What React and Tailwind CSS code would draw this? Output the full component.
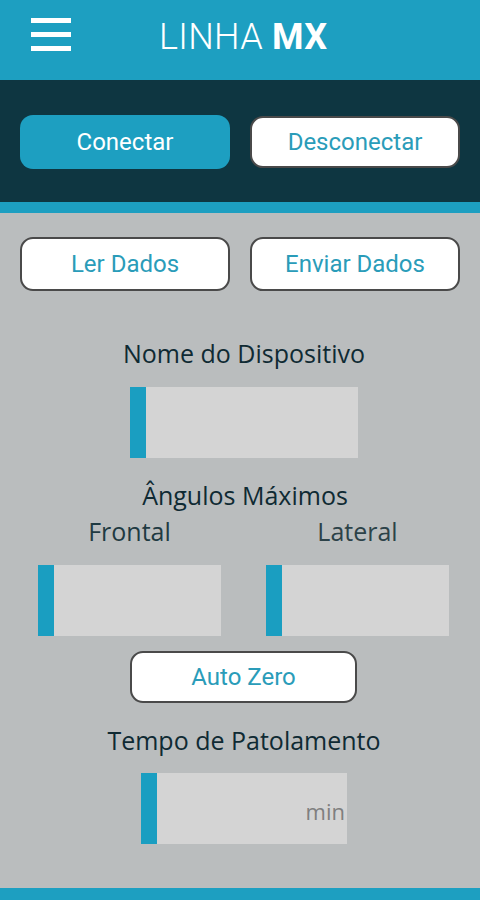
import React, { useState } from 'react';

const roboto = { fontFamily: 'Roboto, "Liberation Sans", sans-serif' };
const openSans = { fontFamily: '"Open Sans", "Liberation Sans", sans-serif' };

const Field = ({ className = "", suffix }) => (
  <div className={`flex h-[71px] bg-[#d4d4d4] ${className}`}>
    <div className="w-[16px] bg-[#1a9ec1]" />
    <div className="flex-1 flex items-center justify-end pr-[2px] pt-[4px]">
      {suffix && <span className="text-[22px] leading-none text-[#7f7f7f]" style={openSans}>{suffix}</span>}
    </div>
  </div>
);

const OutlineButton = ({ children, className = "" }) => (
  <button
    className={`bg-white border-2 border-[#4a4a4a] rounded-[13px] text-[#2a9cb9] text-[24px] ${className}`}
    style={roboto}
  >
    {children}
  </button>
);

const Label = ({ children, className = "" }) => (
  <div className={`text-[25px] leading-[34px] text-[#0f2a33] ${className}`} style={openSans}>
    {children}
  </div>
);

const App = () => {
  const [connected, setConnected] = useState(false);

  return (
    <div className="w-[480px] h-[900px] flex flex-col bg-[#babdbe] overflow-hidden">
      {/* top bar */}
      <div className="h-[80px] bg-[#1d9fc1] flex items-start">
        <div className="ml-[31px] mt-[18px] flex flex-col gap-[9px]">
          <div className="w-[40px] h-[5px] bg-white" />
          <div className="w-[40px] h-[5px] bg-white" />
          <div className="w-[40px] h-[5px] bg-white" />
        </div>
        <div className="ml-[88px] mt-[19px] text-white text-[36px] tracking-[0.3px] leading-none" style={roboto}>
          <span className="font-light">LINHA </span>
          <span className="font-bold">MX</span>
        </div>
      </div>

      {/* connection panel */}
      <div className="h-[122px] bg-[#0e3641] grid grid-cols-2 gap-[20px] px-[20px] pt-[35px]">
        <button
          onClick={() => setConnected(true)}
          className="h-[54px] bg-[#1d9fc1] rounded-[13px] text-white text-[24px]"
          style={roboto}
        >
          Conectar
        </button>
        <OutlineButton className="h-[52px] mt-[1px]">Desconectar</OutlineButton>
      </div>
      <div className="h-[11px] bg-[#1d9fc1]" />

      {/* body */}
      <div className="flex-1 flex flex-col items-center">
        <div className="w-full grid grid-cols-2 gap-[20px] px-[20px] pt-[24px]">
          <OutlineButton className="h-[54px]">Ler Dados</OutlineButton>
          <OutlineButton className="h-[54px]">Enviar Dados</OutlineButton>
        </div>

        <Label className="mt-[45px] ml-[8px]">Nome do Dispositivo</Label>
        <Field className="mt-[17px] w-[228px] ml-[8px]" />

        <Label className="mt-[20px] ml-[10px]">Ângulos Máximos</Label>
        <div className="w-full grid grid-cols-2 gap-[45px] pl-[38px] pr-[31px]">
          <div className="flex flex-col items-center">
            <Label className="mt-[2px] text-[#1f3a42]">Frontal</Label>
            <Field className="mt-[17px] w-full" />
          </div>
          <div className="flex flex-col items-center">
            <Label className="mt-[2px] text-[#2c4248]">Lateral</Label>
            <Field className="mt-[17px] w-full" />
          </div>
        </div>

        <OutlineButton className="mt-[15px] h-[52px] w-[227px] ml-[7px]">Auto Zero</OutlineButton>

        <Label className="mt-[20px] ml-[8px]">Tempo de Patolamento</Label>
        <Field className="mt-[16px] w-[206px] ml-[8px]" suffix="min" />
      </div>

      <div className="h-[12px] bg-[#1d9fc1]" />
    </div>
  );
};

export default App;
